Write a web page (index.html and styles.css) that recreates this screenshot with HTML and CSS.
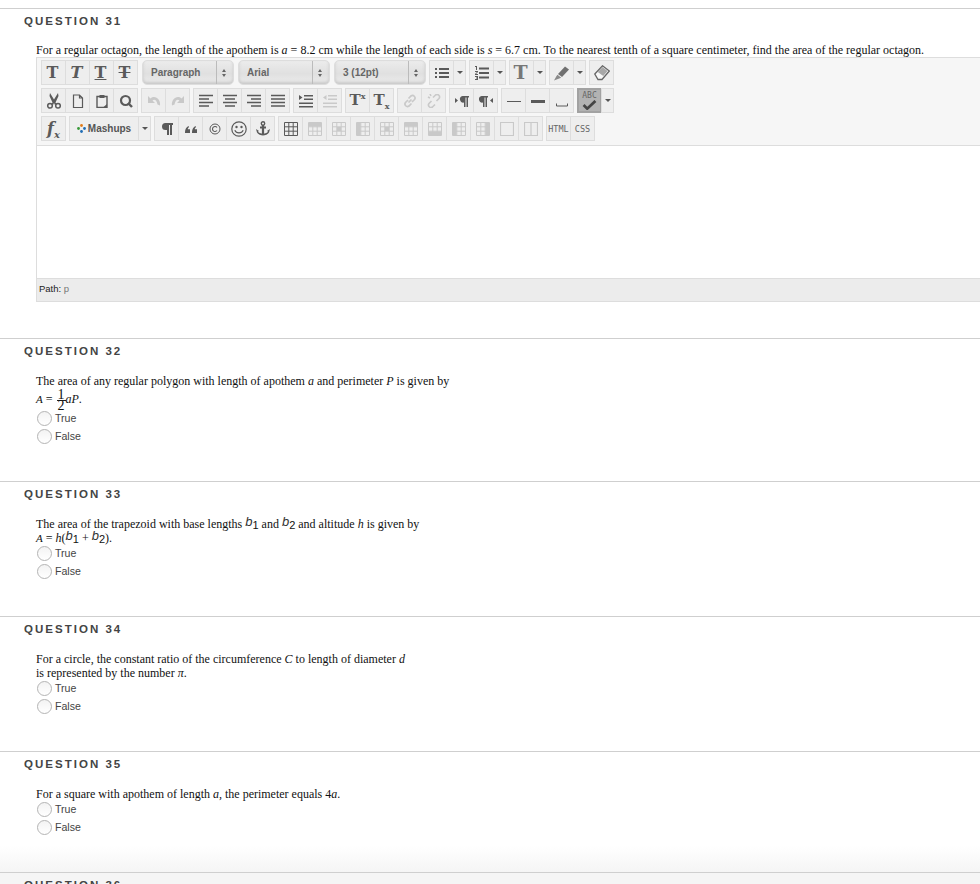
FILE: index.html
```html
<!DOCTYPE html>
<html lang="en">
<head>
<meta charset="utf-8">
<title>Questions</title>
<link rel="stylesheet" href="styles.css">
</head>
<body>
<svg class="defs" xmlns="http://www.w3.org/2000/svg">
  <symbol id="grid" viewBox="0 0 14 14"><path d="M.5.5h13v13H.5zM.5 4.8h13M.5 9.2h13M4.8.5v13M9.2.5v13" fill="none" stroke="currentColor"/></symbol>
  <symbol id="gridfill" viewBox="0 0 14 14"><path d="M.5.5h13v13H.5zM.5 4.8h13M.5 9.2h13M4.8.5v13M9.2.5v13" fill="none" stroke="currentColor"/><path d="M1 1h12v3.500H1z" fill="currentColor"/></symbol>
  <symbol id="gridmid" viewBox="0 0 14 14"><path d="M.5.5h13v13H.5zM.5 4.8h13M.5 9.2h13M4.8.5v13M9.2.5v13" fill="none" stroke="currentColor"/><path d="M5 5h4v4H5z" fill="currentColor"/></symbol>
  <symbol id="gridleft" viewBox="0 0 14 14"><path d="M.5.5h13v13H.5zM.5 4.8h13M.5 9.2h13M4.8.5v13M9.2.5v13" fill="none" stroke="currentColor"/><path d="M1 1h3.500v12H1z" fill="currentColor"/></symbol>
  <symbol id="gridright" viewBox="0 0 14 14"><path d="M.5.5h13v13H.5zM.5 4.8h13M.5 9.2h13M4.800.5v13M9.200.5v13" fill="none" stroke="currentColor"/><path d="M9.500 1H13v12H9.500z" fill="currentColor"/></symbol>
  <symbol id="gridbot" viewBox="0 0 14 14"><path d="M.5.5h13v13H.5zM.5 4.8h13M.5 9.2h13M4.800.5v13M9.200.5v13" fill="none" stroke="currentColor"/><path d="M1 9.500h12V13H1z" fill="currentColor"/></symbol>
  <symbol id="align-l" viewBox="0 0 14 14"><path d="M0 1.500h14M0 5h10M0 8.500h14M0 12h10" stroke="currentColor" stroke-width="1.600" fill="none"/></symbol>
  <symbol id="align-c" viewBox="0 0 14 14"><path d="M0 1.500h14M2 5h10M0 8.500h14M2 12h10" stroke="currentColor" stroke-width="1.600" fill="none"/></symbol>
  <symbol id="align-r" viewBox="0 0 14 14"><path d="M0 1.500h14M4 5h10M0 8.500h14M4 12h10" stroke="currentColor" stroke-width="1.600" fill="none"/></symbol>
  <symbol id="align-j" viewBox="0 0 14 14"><path d="M0 1.500h14M0 5h14M0 8.500h14M0 12h14" stroke="currentColor" stroke-width="1.600" fill="none"/></symbol>
</svg>

<section class="question with-editor">
  <h2 class="q-title">QUESTION 31</h2>
  <p class="q-text">For a regular octagon, the length of the apothem is <i>a</i> = 8.2 cm while the length of each side is <i>s</i> = 6.7 cm. To the nearest tenth of a square centimeter, find the area of the regular octagon.</p>
  <div class="editor">
    <div class="toolbar">
      <div class="row">
        <div class="grp">
          <span class="btn t-b">T</span><span class="btn t-b t-i">T</span><span class="btn t-b t-u">T</span><span class="btn t-b t-s">T</span>
        </div>
        <div class="sel"><span class="sel-label">Paragraph</span><span class="sel-arrows"></span></div>
        <div class="sel"><span class="sel-label">Arial</span><span class="sel-arrows"></span></div>
        <div class="sel"><span class="sel-label">3 (12pt)</span><span class="sel-arrows"></span></div>
        <div class="grp">
          <span class="btn"><svg class="ic" viewBox="0 0 14 14"><path d="M0 2h2v2H0zM0 6h2v2H0zM0 10h2v2H0zM4 2h10v2H4zM4 6h10v2H4zM4 10h10v2H4z" fill="currentColor"/></svg></span><span class="btn narrow"><i class="caret"></i></span>
        </div>
        <div class="grp">
          <span class="btn"><svg class="ic" viewBox="0 0 14 14"><path d="M4 1.500h10v2H4zM4 6h10v2H4zM4 10.500h10v2H4zM0 0h2v4H1V1H0zM0 5h3v1L1 8h2v1H0V8l2-2H0zM0 10h3v4H0v-1h2v-.5H1v-1h1V11H0z" fill="currentColor"/></svg></span><span class="btn narrow"><i class="caret"></i></span>
        </div>
        <div class="grp">
          <span class="btn t-b t-big">T</span><span class="btn narrow"><i class="caret"></i></span>
        </div>
        <div class="grp">
          <span class="btn"><svg class="ic ic-lg" viewBox="0 0 16 16"><path d="M4 9l7-7.500 4 3L8 12z" fill="#707070"/><path d="M3.500 9.800l3.700 3-2 .6L0 15.500l2.500-4.500z" fill="#8a8a8a"/></svg></span><span class="btn narrow"><i class="caret"></i></span>
        </div>
        <div class="grp">
          <span class="btn"><svg class="ic ic-lg" viewBox="0 0 16 16"><path d="M.8 9l7.700-8.200L15.300 6 8 14.500H4z" fill="#f8f8f8" stroke="#666" stroke-width="1.300"/><path d="M3.700 7L8.500 2l5 4-4.200 5z" fill="#a8a8a8"/></svg></span>
        </div>
      </div>
      <div class="row">
        <div class="grp">
          <span class="btn"><svg class="ic ic-lg" viewBox="0 0 16 16"><path d="M4 0l4 6.500L12 0l.5 3-3 6.500 1 1.500-1.500 1L8 10l-1 2-1.500-1 1-1.500L3.500 3z" fill="currentColor"/><circle cx="4" cy="12.800" r="2.300" fill="none" stroke="currentColor" stroke-width="1.500"/><circle cx="12" cy="12.800" r="2.300" fill="none" stroke="currentColor" stroke-width="1.500"/></svg></span>
          <span class="btn"><svg class="ic" viewBox="0 0 14 14"><path d="M2.500 1h6l3 3v9.500h-9zM8.500 1v3h3" fill="none" stroke="currentColor" stroke-width="1.200"/></svg></span>
          <span class="btn"><svg class="ic" viewBox="0 0 14 14"><path d="M2 2.500h10v11H2z" fill="none" stroke="currentColor" stroke-width="1.400"/><path d="M4.500 1h5v3h-5zM12 10v3.500H8z" fill="currentColor"/></svg></span>
          <span class="btn"><svg class="ic" viewBox="0 0 14 14"><circle cx="6.500" cy="6.500" r="4.500" fill="none" stroke="currentColor" stroke-width="2.200"/><path d="M9 9l4 4" stroke="currentColor" stroke-width="2.400"/></svg></span>
        </div>
        <div class="grp off">
          <span class="btn"><svg class="ic" viewBox="0 0 14 14"><path d="M1 2v7h7L5.500 6.500c2-1.500 4-.5 5 4l2.500 1c1-6-5-11-9.500-7z" fill="currentColor"/></svg></span>
          <span class="btn"><svg class="ic" viewBox="0 0 14 14"><path d="M13 2v7H6l2.500-2.500c-2-1.500-4-.5-5 4l-2.500 1c-1-6 5-11 9.500-7z" fill="currentColor"/></svg></span>
        </div>
        <div class="grp">
          <span class="btn"><svg class="ic" viewBox="0 0 14 14"><use href="#align-l"/></svg></span>
          <span class="btn"><svg class="ic" viewBox="0 0 14 14"><use href="#align-c"/></svg></span>
          <span class="btn"><svg class="ic" viewBox="0 0 14 14"><use href="#align-r"/></svg></span>
          <span class="btn"><svg class="ic" viewBox="0 0 14 14"><use href="#align-j"/></svg></span>
        </div>
        <div class="grp">
          <span class="btn"><svg class="ic" viewBox="0 0 14 14"><path d="M0 1l3.500 2.500L0 6zM5 1h9v1.600H5zM5 4.500h9v1.600H5zM0 8.500h14v1.600H0zM0 12h14v1.600H0z" fill="currentColor"/></svg></span>
          <span class="btn off"><svg class="ic" viewBox="0 0 14 14"><path d="M3.500 1L0 3.500 3.500 6zM5 1h9v1.600H5zM5 4.500h9v1.600H5zM0 8.500h14v1.600H0zM0 12h14v1.600H0z" fill="currentColor"/></svg></span>
        </div>
        <div class="grp">
          <span class="btn t-b t-sup"><span>T<sup>x</sup></span></span><span class="btn t-b t-sup"><span>T<sub>x</sub></span></span>
        </div>
        <div class="grp off">
          <span class="btn"><svg class="ic" viewBox="0 0 14 14"><path d="M5.500 8.500l3-3M5 6L2.500 8.500a2.500 2.500 0 0 0 3.500 3.500L8.500 9.500M9 8l2.500-2.500A2.500 2.500 0 0 0 8 2L5.500 4.500" fill="none" stroke="currentColor" stroke-width="1.700"/></svg></span>
          <span class="btn"><svg class="ic" viewBox="0 0 14 14"><path d="M4.500 7L2 9.500A2.500 2.500 0 0 0 5.500 13L8 10.500M9.500 7L12 4.500A2.500 2.500 0 0 0 8.500 1L6 3.500M1 3l2 1M3 0l1 2" fill="none" stroke="currentColor" stroke-width="1.600"/></svg></span>
        </div>
        <div class="grp">
          <span class="btn"><svg class="ic" viewBox="0 0 14 14"><path d="M0 4l3 2.500L0 9zM7.500 2H14v1.500h-1V13h-1.500V3.500h-1V13H9V8.500a3.250 3.250 0 0 1-1.500-6.500z" fill="currentColor"/></svg></span>
          <span class="btn"><svg class="ic" viewBox="0 0 14 14"><path d="M14 4l-3 2.500L14 9zM2.500 2H9v1.500H8V13H6.500V3.500h-1V13H4V8.500A3.250 3.250 0 0 1 2.500 2z" fill="currentColor"/></svg></span>
        </div>
        <div class="grp">
          <span class="btn"><svg class="ic ic-lg" viewBox="0 0 16 16"><path d="M1 8.500h14" stroke="currentColor"/></svg></span>
          <span class="btn"><svg class="ic ic-lg" viewBox="0 0 16 16"><path d="M1 8.500h14" stroke="currentColor" stroke-width="3"/></svg></span>
          <span class="btn"><svg class="ic" viewBox="0 0 14 14"><path d="M1.500 9.500v2.500h11V9.500" fill="none" stroke="currentColor"/></svg></span>
        </div>
        <div class="grp">
          <span class="btn btn-on"><span class="abc">ABC</span><svg class="check" viewBox="0 0 16 11"><path d="M1.500 5.500l4 4L14.500 1" fill="none" stroke="currentColor" stroke-width="3"/></svg></span><span class="btn narrow"><i class="caret"></i></span>
        </div>
      </div>
      <div class="row">
        <div class="grp"><span class="btn t-fx"><i>f<sub>x</sub></i></span></div>
        <div class="grp">
          <span class="btn mash"><svg class="mash-ic" viewBox="0 0 9 9"><circle cx="4.500" cy="1.500" r="1.400" fill="#e07b1a"/><circle cx="1.500" cy="4.500" r="1.400" fill="#3a9a3a"/><circle cx="7.500" cy="4.500" r="1.400" fill="#1f6db5"/><circle cx="4.500" cy="7.500" r="1.400" fill="#1f6db5"/></svg>Mashups</span><span class="btn narrow"><i class="caret"></i></span>
        </div>
        <div class="grp">
          <span class="btn"><svg class="ic" viewBox="0 0 14 14"><path d="M5.500 1H13v2h-1v10h-2V3H9v10H7V8H5.500a3.500 3.500 0 0 1 0-7z" fill="currentColor"/></svg></span>
          <span class="btn"><svg class="ic" viewBox="0 0 14 14"><path d="M1 10c0-3 1.500-5 3.500-6l.5 1C4 6 3.800 6.800 3.800 7.300H6V11H1zM8 10c0-3 1.500-5 3.500-6l.5 1c-1 1-1.200 1.800-1.200 2.300H13V11H8z" fill="currentColor"/></svg></span>
          <span class="btn"><svg class="ic" viewBox="0 0 14 14"><circle cx="7" cy="7" r="5" fill="none" stroke="currentColor" stroke-width="1"/><path d="M9 5.500a2.500 2.500 0 1 0 0 3" fill="none" stroke="currentColor" stroke-width="1.100"/></svg></span>
          <span class="btn"><svg class="ic ic-lg" viewBox="0 0 16 16"><circle cx="8" cy="8" r="7.200" fill="none" stroke="currentColor" stroke-width="1.200"/><circle cx="5.500" cy="6" r="1.200" fill="currentColor"/><circle cx="10.500" cy="6" r="1.200" fill="currentColor"/><path d="M3.800 9.300c1.500 3.400 6.900 3.400 8.400 0" fill="none" stroke="currentColor" stroke-width="1.200"/></svg></span>
          <span class="btn"><svg class="ic ic-lg" viewBox="0 0 16 16"><circle cx="8" cy="2.500" r="1.700" fill="none" stroke="currentColor" stroke-width="1.400"/><path d="M8 4v10M5 6.500h6" stroke="currentColor" stroke-width="2.200" fill="none"/><path d="M1 8l1 3.500c1 2 4 3 6 3s5-1 6-3l1-3.500-3 2 1 .5c-.8 1.500-2.500 2-5 2s-4.200-.5-5-2l1-.5z" fill="currentColor"/></svg></span>
        </div>
        <div class="grp">
          <span class="btn"><svg class="ic" viewBox="0 0 14 14"><use href="#grid"/></svg></span>
          <span class="btn off"><svg class="ic" viewBox="0 0 14 14"><use href="#gridfill"/></svg></span>
          <span class="btn off"><svg class="ic" viewBox="0 0 14 14"><use href="#gridmid"/></svg></span>
          <span class="btn off"><svg class="ic" viewBox="0 0 14 14"><use href="#gridleft"/></svg></span>
          <span class="btn off"><svg class="ic" viewBox="0 0 14 14"><use href="#gridmid"/></svg></span>
          <span class="btn off"><svg class="ic" viewBox="0 0 14 14"><use href="#gridfill"/></svg></span>
          <span class="btn off"><svg class="ic" viewBox="0 0 14 14"><use href="#gridbot"/></svg></span>
          <span class="btn off"><svg class="ic" viewBox="0 0 14 14"><use href="#gridleft"/></svg></span>
          <span class="btn off"><svg class="ic" viewBox="0 0 14 14"><use href="#gridright"/></svg></span>
          <span class="btn off"><svg class="ic" viewBox="0 0 14 14"><path d="M.5.5h13v13H.5z" fill="none" stroke="currentColor" stroke-width="1.200"/></svg></span>
          <span class="btn off"><svg class="ic" viewBox="0 0 14 14"><path d="M.5.5h13v13H.5zM7 .5v13" fill="none" stroke="currentColor" stroke-width="1.200"/></svg></span>
        </div>
        <div class="grp">
          <span class="btn code">HTML</span><span class="btn code">CSS</span>
        </div>
      </div>
    </div>
    <div class="edit-area"></div>
    <div class="path">Path: <span class="path-p">p</span></div>
  </div>
</section>

<section class="question">
  <h2 class="q-title">QUESTION 32</h2>
  <p class="q-text">The area of any regular polygon with length of apothem <i>a</i> and perimeter <i>P</i> is given by</p>
  <p class="q-math"><i class="small">A</i> = <span class="frac"><span class="num">1</span><span class="den">2</span></span><i>aP</i>.</p>
  <label class="opt"><span class="radio"></span>True</label>
  <label class="opt"><span class="radio"></span>False</label>
</section>

<section class="question">
  <h2 class="q-title">QUESTION 33</h2>
  <p class="q-text">The area of the trapezoid with base lengths <span class="b"><i>b</i><sub>1</sub></span> and <span class="b"><i>b</i><sub>2</sub></span> and altitude <i>h</i> is given by</p>
  <p class="q-text"><i class="small">A</i> = <i>h</i>(<span class="b"><i>b</i><sub>1</sub></span> + <span class="b"><i>b</i><sub>2</sub></span>).</p>
  <label class="opt"><span class="radio"></span>True</label>
  <label class="opt"><span class="radio"></span>False</label>
</section>

<section class="question">
  <h2 class="q-title">QUESTION 34</h2>
  <p class="q-text">For a circle, the constant ratio of the circumference <i>C</i> to length of diameter <i>d</i></p>
  <p class="q-text">is represented by the number <i>π</i>.</p>
  <label class="opt"><span class="radio"></span>True</label>
  <label class="opt"><span class="radio"></span>False</label>
</section>

<section class="question">
  <h2 class="q-title">QUESTION 35</h2>
  <p class="q-text">For a square with apothem of length <i>a</i>, the perimeter equals 4<i>a</i>.</p>
  <label class="opt"><span class="radio"></span>True</label>
  <label class="opt"><span class="radio"></span>False</label>
</section>

<section class="question last">
  <h2 class="q-title">QUESTION 36</h2>
</section>
</body>
</html>
```
FILE: styles.css
```css
html, body {
  margin: 0;
  padding: 0;
  height: 884px;
  overflow: hidden;
  background: #fff;
}
body {
  padding-top: 8px;
  box-sizing: border-box;
  font-family: "Liberation Serif", serif;
  color: #111;
}
.defs { display: none; }

.question {
  border-top: 1px solid #cfcfcf;
  padding: 5px 0 36px 36px;
}
.question:nth-last-child(2) {
  background: linear-gradient(#fff 78%, #f5f5f5 100%);
}
.last {
  background: #f5f5f5;
}
.q-title {
  margin: 0 0 16px -12px;
  font: bold 11.5px/14px "Liberation Sans", sans-serif;
  letter-spacing: 2.02px;
  color: #444;
}
.with-editor .q-title { margin-bottom: 15px; }
.q-text, .q-math {
  margin: 0;
  font-size: 12px;
  line-height: 14px;
  white-space: nowrap;
}
.q-math {
  height: 22px;
  line-height: 22px;
}
.small { font-size: 11px; }
.frac {
  display: inline-flex;
  flex-direction: column;
  align-items: center;
  vertical-align: middle;
  font-size: 14px;
  margin-left: 1px;
}
.num { border-bottom: 1px solid #222; line-height: 11px; padding: 0 1px; }
.den { line-height: 10px; }
.b i {
  font-family: "Liberation Sans", sans-serif;
  font-size: 13px;
  line-height: 0;
  color: #333;
  position: relative;
  top: -2px;
}
.b sub {
  font-family: "Liberation Sans", sans-serif;
  font-size: 11px;
  vertical-align: -1px;
  line-height: 0;
}
.opt {
  display: flex;
  align-items: center;
  height: 18px;
  font: 10.6px/18px "Liberation Sans", sans-serif;
  color: #444;
}
.q-text + .opt, .q-math + .opt { margin-top: -1px; }
.radio {
  width: 15px;
  height: 15px;
  box-sizing: border-box;
  border: 1.5px solid #b4b4b4;
  border-radius: 50%;
  margin: 0 3px 0 1px;
  background: linear-gradient(#f3f3f3, #fff);
}

/* editor */
.editor {
  border: 1px solid #ddd;
  border-right: 0;
}
.toolbar {
  background: #f6f6f6;
  padding: 2px 0 4px 4px;
  border-bottom: 1px solid #ddd;
  display: flex;
  flex-direction: column;
  gap: 3px;
}
.row {
  display: flex;
  gap: 3px;
  height: 25px;
  align-items: flex-start;
}
.grp {
  display: flex;
  color: #666;
}
.btn {
  box-sizing: border-box;
  width: 25px;
  height: 25px;
  background: #eee;
  border: 1px solid #ddd;
  margin-left: -1px;
  display: flex;
  align-items: center;
  justify-content: center;
  color: #5a5a5a;
  flex: none;
}
.grp .btn:first-child { margin-left: 0; }
.narrow { width: 13px; }
.off .btn, .btn.off { color: #c9c9c9; }
.ic { width: 14px; height: 14px; display: block; }
.ic-lg { width: 16px; height: 16px; }
.caret {
  width: 0;
  height: 0;
  border-left: 3px solid transparent;
  border-right: 3px solid transparent;
  border-top: 3px solid #555;
}
.t-b {
  font: bold 16px/1 "DejaVu Serif", serif;
  padding-right: 2px;
}
.t-i { font-style: italic; }
.t-u { text-decoration: underline; text-underline-offset: 1px; }
.t-s { text-decoration: line-through; }
.t-big { font-size: 19px; color: #777; }
.t-sup { font-size: 15px; padding-right: 0; }
.t-sup sup, .t-sup sub { font-size: 8px; line-height: 0; }
.t-fx { font: bold 16px/1 "DejaVu Serif", serif; }
.t-fx sub { font-size: 10px; line-height: 0; }
.sel {
  box-sizing: border-box;
  width: 92px;
  height: 25px;
  margin-left: 1px;
  border: 1px solid #ddd;
  border-radius: 5px;
  background: linear-gradient(#ececec, #e0e0e0 55%, #ececec);
  box-shadow: inset 0 -2px 3px #c8c8c8;
  display: flex;
  align-items: center;
}
.sel-label {
  flex: 1;
  padding-left: 8px;
  font: bold 10px "Liberation Sans", sans-serif;
  color: #666;
}
.sel-arrows {
  width: 16px;
  height: 23px;
  border-left: 1px solid #bbb;
  position: relative;
}
.sel-arrows::before, .sel-arrows::after {
  content: "";
  position: absolute;
  left: 5px;
  border-left: 2.5px solid transparent;
  border-right: 2.5px solid transparent;
}
.sel-arrows::before { top: 8px; border-bottom: 3px solid #666; }
.sel-arrows::after { top: 12.500px; border-top: 3px solid #666; }
.btn-on {
  background: #b2b2b2;
  border: 2px solid #a2a2a2;
  color: #444;
  flex-direction: column;
  padding-top: 1px;
}
.abc {
  font: 8px/8px "DejaVu Sans Mono", monospace;
  color: #666;
}
.check { width: 15px; height: 10px; display: block; }
.mash {
  width: 70px;
  font: bold 10px "Liberation Sans", sans-serif;
  color: #555;
  gap: 2px;
}
.mash-ic { width: 9px; height: 9px; }
.code {
  font: 8.5px "DejaVu Sans Mono", monospace;
  color: #666;
}
.edit-area {
  height: 132px;
  background: #fff;
}
.path {
  box-sizing: border-box;
  height: 23px;
  background: #ececec;
  border-top: 1px solid #ddd;
  padding: 3px 0 0 2px;
  font: 9.5px/14px "Liberation Sans", sans-serif;
  color: #222;
}
.path-p { color: #777; }
```
